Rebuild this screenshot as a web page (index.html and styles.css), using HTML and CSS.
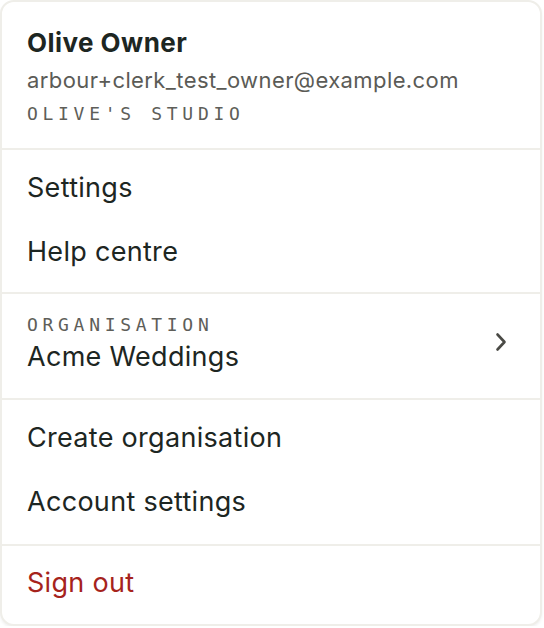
FILE: index.html
```html
<!DOCTYPE html>
<html>
<head>
<meta charset="utf-8">
<link rel="stylesheet" href="styles.css">
</head>
<body>
<div class="menu">
  <div class="header">
    <div class="name">Olive Owner</div>
    <div class="email">arbour+clerk_test_owner@example.com</div>
    <div class="label studio">OLIVE'S STUDIO</div>
  </div>
  <div class="section s1">
    <div class="item">Settings</div>
    <div class="item">Help centre</div>
  </div>
  <div class="section org">
    <div class="org-text">
      <div class="label">ORGANISATION</div>
      <div class="org-name">Acme Weddings</div>
    </div>
    <svg class="chev" width="12" height="20" viewBox="0 0 12 20"><path d="M2.5 2.5 L9.5 10 L2.5 17.5" fill="none" stroke="#4a4a45" stroke-width="2.6" stroke-linecap="round" stroke-linejoin="round"/></svg>
  </div>
  <div class="section s3">
    <div class="item">Create organisation</div>
    <div class="item">Account settings</div>
  </div>
  <div class="section s4">
    <div class="item signout">Sign out</div>
  </div>
</div>
</body>
</html>
```
FILE: styles.css
```css
* { box-sizing: border-box; }
html, body { margin: 0; padding: 0; background: #ffffff; }
body { font-family: Inter, "Noto Sans", sans-serif; color: #1d2622; }
.menu {
  width: 542px;
  height: 626px;
  border: 2px solid #efeee9;
  border-radius: 14px;
  background: #fff;
  box-shadow: 0 2px 3px rgba(0,0,0,0.06);
  overflow: hidden;
}
.header { padding: 24px 25px 23px; border-bottom: 2px solid #efeee9; }
.name { font-size: 26px; font-weight: 700; line-height: 34px; letter-spacing: 0.45px; }
.email { font-size: 22px; line-height: 34px; color: #5b5b56; margin-top: 3px; letter-spacing: 0.4px; }
.label {
  font-family: "DejaVu Sans Mono", "Liberation Mono", monospace;
  font-size: 18px; letter-spacing: 4.7px; color: #5e5e59; line-height: 22px;
}
.studio { margin-top: 6px; }
.section { border-bottom: 2px solid #efeee9; }
.section:last-child { border-bottom: none; }
.s1 { padding: 6px 0 8px; }
.s3 { padding: 6px 0 10px; }
.s4 { padding: 5px 0; }
.item { padding: 16px 25px; font-size: 27px; line-height: 32px; letter-spacing: 0.3px; }
.signout { color: #a6231c; }
.org { display: flex; align-items: center; justify-content: space-between; padding: 20px 33px 25px 25px; }
.org-name { font-size: 27px; line-height: 32px; margin-top: 5px; letter-spacing: 0.3px; }
.chev { display: block; margin-top: -3px; }
```
